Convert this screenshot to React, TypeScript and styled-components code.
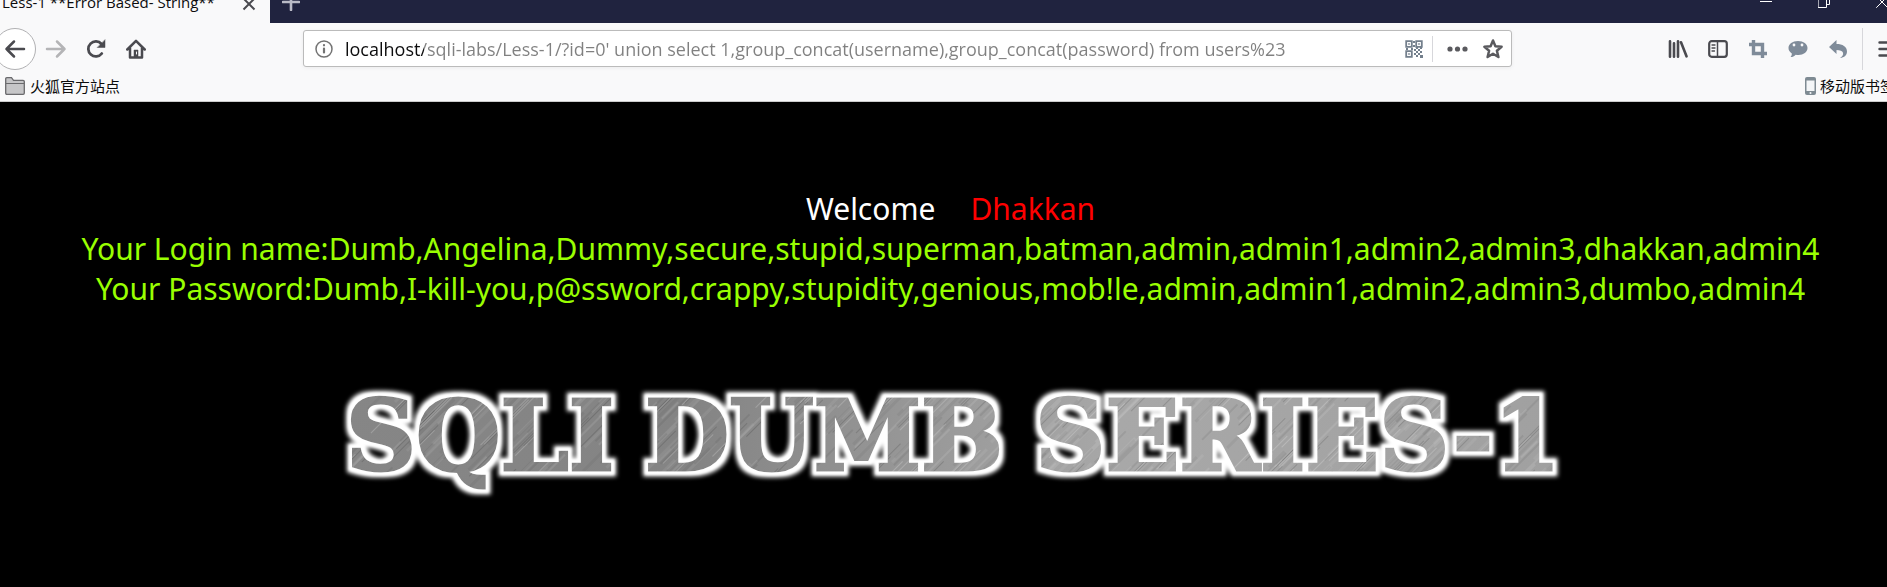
import React from "react";
import styled, { createGlobalStyle } from "styled-components";

const GlobalStyle = createGlobalStyle`
  *, *::before, *::after { box-sizing: border-box; }
  html { background: #000; }
  body {
    margin: 0;
    overflow-x: hidden;
    background: #000;
    font-family: "Open Sans", "Noto Sans CJK SC", sans-serif;
  }
`;

const Chrome = styled.header`
  background: #f9f9fa;
  border-bottom: 1px solid #ccc;
  overflow: hidden;
`;

const TabStrip = styled.div`
  display: flex;
  height: 23px;
  overflow: hidden;
  background: #20233f;
`;

const Tab = styled.div`
  display: flex;
  align-items: flex-start;
  width: 270px;
  height: 23px;
  padding-right: 13px;
  background: #f9f9fa;
`;

const TabTitle = styled.span`
  flex: 1;
  height: 20px;
  margin-top: -8px;
  padding-left: 2px;
  font-size: 15px;
  line-height: 20px;
  white-space: nowrap;
  color: #0c0c0d;
`;

const PlainButton = styled.button<{ $w?: number; $h?: number; $color?: string }>`
  display: flex;
  flex: none;
  align-items: center;
  justify-content: center;
  width: ${(p) => p.$w ?? 40}px;
  height: ${(p) => p.$h ?? 40}px;
  padding: 0;
  border: 0;
  background: none;
  color: ${(p) => p.$color ?? "#4a4a4f"};
`;

const RaisedButton = styled(PlainButton)`
  margin-top: -6px;
`;

const WindowControls = styled.div`
  display: flex;
  gap: 16px;
  margin: -8px -16px 0 auto;
`;

const NavBar = styled.div`
  display: flex;
  align-items: center;
  height: 51px;
`;

const BackButton = styled(PlainButton)`
  margin-left: -6px;
  border: 1px solid #b1b1b3;
  border-radius: 50%;
  background: #fff;
`;

const NavButtons = styled.div`
  display: flex;
  align-items: center;
  flex: none;
`;

const UrlBar = styled.div`
  display: flex;
  flex: 1;
  align-items: center;
  min-width: 0;
  height: 37px;
  margin: 0 146px 0 147px;
  padding: 0 2px 0 4px;
  border: 1px solid #bbb;
  border-radius: 3px;
  background: #fff;
  box-shadow: 0 1px 4px rgba(0, 0, 0, 0.06);
`;

const UrlInput = styled.input`
  flex: 1;
  min-width: 0;
  height: 32px;
  margin-left: 5px;
  padding: 0;
  border: 0;
  outline: 0;
  font-family: inherit;
  font-size: 18px;
  background: linear-gradient(90deg, #0c0c0d 79px, #808080 79px);
  -webkit-background-clip: text;
  background-clip: text;
  color: transparent;
`;

const Divider = styled.span<{ $h: number }>`
  flex: none;
  width: 1px;
  height: ${(p) => p.$h}px;
  background: #d7d7db;
`;

const MenuDivider = styled(Divider)`
  margin: 0 5px 0 4px;
`;

const ToolButtons = styled.div`
  display: flex;
  flex: none;
  align-items: center;
  margin-right: -21px;
`;

const Bookmarks = styled.nav`
  display: flex;
  justify-content: space-between;
  height: 27px;
  padding-left: 5px;
`;

const Bookmark = styled.a<{ $gap: number; $shift?: number }>`
  display: flex;
  align-items: center;
  gap: ${(p) => p.$gap}px;
  height: 24px;
  margin-right: ${(p) => p.$shift ?? 0}px;
  font-family: "Noto Sans CJK SC", sans-serif;
  font-size: 15px;
  line-height: 24px;
  white-space: nowrap;
  color: #0c0c0d;
  text-decoration: none;
`;

const Page = styled.main`
  padding: 87px 0 74px;
  background: #000;
  text-align: center;
  color: #99ff00;
`;

const Line = styled.p<{ $color?: string }>`
  margin: 0;
  padding-left: 14px;
  font-family: "Noto Sans", sans-serif;
  font-size: 30px;
  line-height: 40px;
  white-space: nowrap;
  color: ${(p) => p.$color ?? "inherit"};
`;

const Name = styled.span`
  margin-left: 35px;
  color: #f00;
`;

const Banner = styled.svg`
  display: block;
  margin: 70px auto 0;
`;

const glyph = {
  fill: "none",
  stroke: "currentColor",
  strokeLinecap: "round",
  strokeLinejoin: "round",
} as const;

const url =
  "localhost/sqli-labs/Less-1/?id=0' union select 1,group_concat(username),group_concat(password) from users%23";

const streaks = Array.from({ length: 150 }, (_, i) => {
  const len = 15 + ((i * 29) % 60);
  return {
    y: (i * 37) % 125,
    x: (i * 83) % (290 - len),
    len,
    thick: 1 + (i % 3),
    light: i % 2 === 0,
  };
});

const words = [
  { text: "SQLI", x: 480 },
  { text: "DUMB", x: 824 },
  { text: "SERIES-1", x: 1298 },
];

function Title() {
  return (
    <Banner width="1260" height="130" viewBox="314 380 1260 130" role="img" aria-label="SQLI DUMB SERIES-1">
      <defs>
        <linearGradient id="tone" x1="0" x2="1" y1="0" y2="0">
          <stop offset="0" stopColor="#868686" />
          <stop offset="0.3" stopColor="#848484" />
          <stop offset="0.5" stopColor="#9a9a9a" />
          <stop offset="0.64" stopColor="#a8a8a8" />
          <stop offset="1" stopColor="#a0a0a0" />
        </linearGradient>
        <pattern id="streaks" width="290" height="127" patternUnits="userSpaceOnUse" patternTransform="rotate(-45)">
          {streaks.map((s, i) => (
            <rect
              key={i}
              x={s.x}
              y={s.y}
              width={s.len}
              height={s.thick}
              fill={s.light ? "#fff" : "#000"}
              opacity={(s.light ? 0.2 : 0.14) / s.thick}
            />
          ))}
        </pattern>
        <pattern id="metal" x="314" y="380" width="1260" height="130" patternUnits="userSpaceOnUse">
          <rect width="1260" height="130" fill="url(#tone)" />
          <rect width="1260" height="130" fill="url(#streaks)" />
        </pattern>
        <filter id="glow" x="314" y="380" width="1260" height="130" filterUnits="userSpaceOnUse">
          <feMorphology in="SourceAlpha" operator="dilate" radius="5" result="wide" />
          <feGaussianBlur in="wide" stdDeviation="2" result="soft" />
          <feFlood floodColor="#fff" />
          <feComposite in2="soft" operator="in" result="halo" />
          <feMorphology in="SourceAlpha" operator="dilate" radius="3" result="near" />
          <feGaussianBlur in="near" stdDeviation="1" result="nearSoft" />
          <feFlood floodColor="#fff" />
          <feComposite in2="nearSoft" operator="in" result="rim" />
          <feMerge>
            <feMergeNode in="halo" />
            <feMergeNode in="rim" />
            <feMergeNode in="SourceGraphic" />
          </feMerge>
        </filter>
      </defs>
      <g
        filter="url(#glow)"
        fill="url(#metal)"
        stroke="url(#metal)"
        strokeWidth="3"
        fontFamily="DejaVu Serif, serif"
        fontWeight="700"
        fontSize="97"
        textAnchor="middle"
      >
        {words.map((w) => (
          <text key={w.text} x={w.x} y="471">
            {w.text}
          </text>
        ))}
      </g>
    </Banner>
  );
}

export default function App() {
  return (
    <>
      <GlobalStyle />
      <Chrome>
        <TabStrip>
          <Tab>
            <TabTitle>Less-1 **Error Based- String**</TabTitle>
            <RaisedButton $w={16} $h={19} aria-label="Close tab">
              <svg width="16" height="16" viewBox="0 0 16 16" {...glyph} strokeWidth="2" strokeLinecap="butt">
                <path d="M2.500 2.500l11 11M13.500 2.500l-11 11" />
              </svg>
            </RaisedButton>
          </Tab>
          <RaisedButton $w={42} $h={16} $color="#b9bac6" aria-label="New tab">
            <svg width="18" height="18" viewBox="0 0 18 18" {...glyph} strokeWidth="2.600">
              <path d="M9 1v16M1 9h16" />
            </svg>
          </RaisedButton>
          <WindowControls>
            <PlainButton $w={42} $h={18} $color="#fff" aria-label="Minimize">
              <svg width="12" height="18" viewBox="0 0 12 18" {...glyph} strokeLinecap="butt">
                <path d="M0 9.500h12" />
              </svg>
            </PlainButton>
            <PlainButton $w={42} $h={18} $color="#fff" aria-label="Restore">
              <svg width="12" height="18" viewBox="0 0 12 18" {...glyph} strokeLinejoin="miter">
                <path d="M.5 6.500h8v9h-8zM3 6V4.500h8.500v8H9" />
              </svg>
            </PlainButton>
            <PlainButton $w={42} $h={18} $color="#fff" aria-label="Close window">
              <svg width="12" height="18" viewBox="0 0 12 18" {...glyph}>
                <path d="M.5 4.500l11 11M11.500 4.500l-11 11" />
              </svg>
            </PlainButton>
          </WindowControls>
        </TabStrip>

        <NavBar>
          <NavButtons>
            <BackButton $w={42} $h={42} aria-label="Back">
              <svg width="22" height="20" viewBox="0 0 22 20" {...glyph} strokeWidth="2.500">
                <path d="M20 10H2.500M10 2.500L2.500 10l7.500 7.500" />
              </svg>
            </BackButton>
            <PlainButton $color="#b4b4b6" aria-label="Forward">
              <svg width="22" height="20" viewBox="0 0 22 20" {...glyph} strokeWidth="2.500">
                <path d="M2 10h17.500M12 2.500l7.500 7.500-7.500 7.500" />
              </svg>
            </PlainButton>
            <PlainButton aria-label="Reload">
              <svg width="20" height="20" viewBox="0 0 20 20" {...glyph} strokeWidth="2.800">
                <path d="M15.800 14.500A7.500 7.500 0 1 1 15.500 5" />
                <path d="M19 1v7.500h-7.500z" fill="currentColor" strokeWidth="0.500" />
              </svg>
            </PlainButton>
            <PlainButton aria-label="Home">
              <svg width="20" height="20" viewBox="0 0 20 20" {...glyph} strokeWidth="2.500">
                <path d="M1.300 10.500L10 1.800l8.700 8.700M4 9v9.500h12V9" />
                <path d="M8 18v-7h4v7z" fill="currentColor" strokeWidth="0.500" />
                <path d="M10.500 13v2" stroke="#f9f9fa" strokeWidth="1" />
              </svg>
            </PlainButton>
          </NavButtons>

          <UrlBar>
            <PlainButton $w={32} $h={32} $color="#737373" aria-label="Site information">
              <svg width="18" height="18" viewBox="0 0 18 18" {...glyph} strokeWidth="1.500">
                <circle cx="9" cy="9" r="8" />
                <path d="M9 8.500v4M9 5v.3" strokeWidth="2.200" />
              </svg>
            </PlainButton>
            <UrlInput aria-label="Address" defaultValue={url} spellCheck={false} />
            <PlainButton $w={36} $h={32} $color="#737f8c" aria-label="QR code">
              <svg width="18" height="18" viewBox="0 0 18 18" {...glyph} strokeWidth="1.800" strokeLinejoin="miter" strokeLinecap="butt">
                <path d="M1.200 1.200h5.600v5.600H1.200zM11.200 1.200h5.600v5.600h-5.600zM1.200 11.200h5.600v5.600H1.200z" />
                <path
                  stroke="none"
                  fill="currentColor"
                  d="M3.200 3.200h1.600v1.600H3.200zM13.200 3.200h1.600v1.600h-1.600zM3.200 13.200h1.600v1.600H3.200zM8 1h2v2H8zM8 5h2v2H8zM6 8h2v2H6zM9 9h2v2H9zM11 7h2v2h-2zM13 9h2v2h-2zM15 7h2v2h-2zM11 11h2v2h-2zM15 11h2v2h-2zM9 13h2v2H9zM13 13h2v2h-2zM11 15h2v2h-2zM15 15h3v3h-3zM1 8h2v2H1z"
                />
              </svg>
            </PlainButton>
            <Divider $h={26} />
            <PlainButton $w={44} $h={32} $color="#5a5a5e" aria-label="Page actions">
              <svg width="26" height="6" viewBox="0 0 26 6" fill="currentColor">
                <circle cx="8" cy="3" r="2.600" />
                <circle cx="15.500" cy="3" r="2.600" />
                <circle cx="23" cy="3" r="2.600" />
              </svg>
            </PlainButton>
            <PlainButton $w={32} $h={32} $color="#5a5a5e" aria-label="Bookmark this page">
              <svg width="20" height="20" viewBox="0 0 20 20" {...glyph} strokeWidth="2.500">
                <path d="M10 1.500l2.400 5.700 6.200.5-4.700 4 1.500 6.300L10 14.700 4.600 18l1.500-6.300-4.700-4 6.200-.5z" />
              </svg>
            </PlainButton>
          </UrlBar>

          <ToolButtons>
            <PlainButton aria-label="Library">
              <svg width="20" height="18" viewBox="0 0 20 18" {...glyph} strokeWidth="2.600">
                <path d="M2 1.300v15.400M6 3.300v13.400M10 1.300v15.400M13 2.300l5.500 14" />
              </svg>
            </PlainButton>
            <PlainButton aria-label="Sidebars">
              <svg width="20" height="18" viewBox="0 0 20 18" {...glyph} strokeWidth="2.200">
                <rect x="1.200" y="1.200" width="17.600" height="15.600" rx="2.500" />
                <path d="M9.500 1.500v15" strokeWidth="1.500" />
                <path d="M4 5h3M4 8h3M4 11h2.500" strokeWidth="1.300" />
              </svg>
            </PlainButton>
            <PlainButton $color="#7f8b99" aria-label="Screenshot">
              <svg width="18" height="18" viewBox="0 0 18 18" {...glyph} strokeWidth="3.400" strokeLinecap="butt" strokeLinejoin="miter">
                <path d="M4.500 0v13.500H18M0 4.500h13.500V18" />
              </svg>
            </PlainButton>
            <PlainButton $color="#7f8b99" aria-label="Chat">
              <svg width="20" height="18" viewBox="0 0 20 18" fill="currentColor">
                <path d="M10 1c5.500 0 9.500 3 9.500 7s-4 7-9 7c-1 0-2-.1-2.800-.3C6.300 16.200 4.600 17 2.600 17c.8-1 1.300-2.300 1.200-3.600C1.700 12.200.5 10.300.5 8c0-4 4-7 9.500-7z" />
                <circle cx="6" cy="5" r="1.400" fill="#f9f9fa" />
                <circle cx="14" cy="5" r="1.400" fill="#f9f9fa" />
              </svg>
            </PlainButton>
            <PlainButton $color="#7f8b99" aria-label="Undo">
              <svg width="18" height="18" viewBox="0 0 18 18" fill="currentColor">
                <path d="M7.500 0v4C13.500 4 18 6.500 18 11.500c0 3.500-2.500 6-7 6.500 2.500-1.400 3.500-3.300 3-5.200-.6-2-3-2.800-6.500-2.800v4L0 7z" />
              </svg>
            </PlainButton>
            <MenuDivider $h={42} />
            <PlainButton aria-label="Open menu">
              <svg width="20" height="18" viewBox="0 0 20 18" {...glyph} strokeWidth="2.400">
                <path d="M1.500 2.500h17M1.500 9h17M1.500 15.500h17" />
              </svg>
            </PlainButton>
          </ToolButtons>
        </NavBar>

        <Bookmarks aria-label="Bookmarks">
          <Bookmark href="#" $gap={5}>
            <svg width="20" height="18" viewBox="0 0 20 18" fill="#c6c6c8" stroke="#6a6a6d">
              <path d="M.7 16V2c0-.8.4-1.300 1.200-1.300h4.600l2 2.600h9.600c.8 0 1.200.5 1.200 1.200V16c0 .8-.4 1.300-1.200 1.300H1.900C1.100 17.300.7 16.800.7 16z" strokeWidth="1.300" />
              <path d="M1 6.500h18" />
            </svg>
            火狐官方站点
          </Bookmark>
          <Bookmark href="#" $gap={4} $shift={-8}>
            <svg width="11" height="18" viewBox="0 0 11 18" fill="#7f8b93">
              <rect width="11" height="18" rx="2" />
              <rect x="1.500" y="3.500" width="8" height="10.500" fill="#f4f6f8" />
              <circle cx="5.500" cy="16" r="1" fill="#f4f6f8" />
            </svg>
            移动版书签
          </Bookmark>
        </Bookmarks>
      </Chrome>

      <Page>
        <Line $color="#fff">
          Welcome<Name>Dhakkan</Name>
        </Line>
        <Line>Your Login name:Dumb,Angelina,Dummy,secure,stupid,superman,batman,admin,admin1,admin2,admin3,dhakkan,admin4</Line>
        <Line>Your Password:Dumb,I-kill-you,p@ssword,crappy,stupidity,genious,mob!le,admin,admin1,admin2,admin3,dumbo,admin4</Line>
        <Title />
      </Page>
    </>
  );
}
